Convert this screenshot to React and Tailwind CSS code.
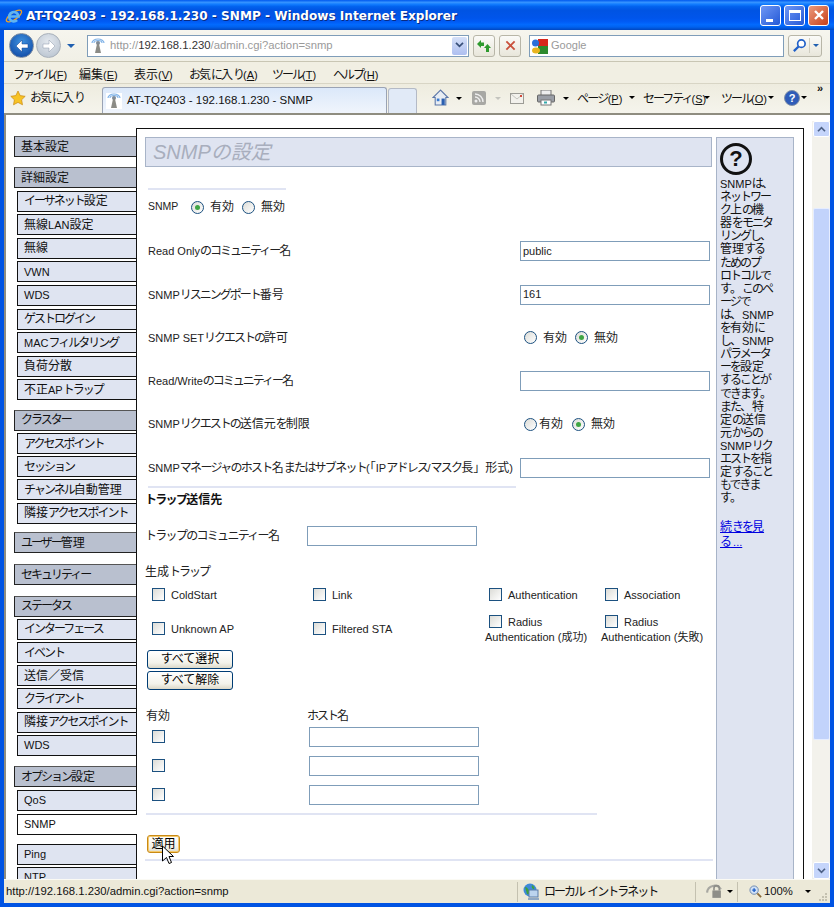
import React from 'react';

const sideGroups = [
  { head: '基本設定', items: [], gap: 'mb-[10px]', pitch: 'mt-[2.6px]' },
  { head: '詳細設定', items: ['イーサネット設定', '無線LAN設定', '無線', 'VWN', 'WDS', 'ゲストログイン', 'MACフィルタリング', '負荷分散', '不正APトラップ'], gap: 'mb-[9.5px]', pitch: 'mt-[2.6px]' },
  { head: 'クラスター', items: ['アクセスポイント', 'セッション', 'チャンネル自動管理', '隣接アクセスポイント'], gap: 'mb-[8.5px]', pitch: 'mt-[2.2px]' },
  { head: 'ユーザー管理', items: [], gap: 'mb-[11px]', pitch: 'mt-[2.2px]' },
  { head: 'セキュリティー', items: [], gap: 'mb-[10.6px]', pitch: 'mt-[2.2px]' },
  { head: 'ステータス', items: ['インターフェース', 'イベント', '送信／受信', 'クライアント', '隣接アクセスポイント', 'WDS'], gap: 'mb-[10.5px]', pitch: 'mt-[2.2px]' },
  { head: 'オプション設定', items: ['QoS', 'SNMP', 'Ping', 'NTP'], gap: '', pitch: 'mt-[2.6px]' },
];

const helpLines = ['SNMPは、', 'ネットワー', 'ク上の機', '器をモニタ', 'リングし、', '管理する', 'ためのプ', 'ロトコルで', 'す。このペ', 'ージで', 'は、SNMP', 'を有効に', 'し、SNMP', 'パラメータ', 'ーを設定', 'することが', 'できます。', 'また、特', '定の送信', '元からの', 'SNMPリク', 'エストを指', '定すること', 'もできま', 'す。'];

// the screenshot's japanese font has narrow kana, so kana runs get squeezed
function K({ children, loose }) {
  const parts = children.split(/([\u3040-\u30FF]+|[\u4E00-\u9FFF「」、。／]+)/).filter(Boolean);
  return parts.map((p, i) => {
    if (/^[\u3040-\u30FF]/.test(p)) return <span key={i} className={`text-[12px] ${loose ? 'tracking-[-1.7px]' : 'tracking-[-2px]'}`}>{p}</span>;
    if (/^[\u4E00-\u9FFF「」、。／]/.test(p)) return <span key={i} className="text-[12px]">{p}</span>;
    return p;
  });
}

function Antenna({ className }) {
  return (
    <svg viewBox="0 0 16 16" className={className}>
      <path d="M2 5a6 4 0 0 1 12 0M4 5a4 2.5 0 0 1 8 0" fill="none" stroke="#7fb2e8" strokeWidth="1.2" />
      <circle cx="8" cy="5" r="2" fill="#7f8a96" />
      <path d="M7 6h2l2 9H5z" fill="#8b8b86" />
    </svg>
  );
}

function IeLogo() {
  return (
    <svg viewBox="0 0 18 18" className="w-[18px] h-[18px]">
      <ellipse cx="9" cy="9" rx="9" ry="3.5" fill="none" stroke="#f2a321" strokeWidth="1.3" transform="rotate(-35 9 9)" />
      <path d="M4.500 9.500h9a4.700 4.700 0 1 0-1.400 3.600" fill="none" stroke="#5fb4f2" strokeWidth="2.600" />
    </svg>
  );
}

function Arrow({ dir }) {
  return (
    <svg viewBox="0 0 16 16" className="w-[16px] h-[16px]">
      <path d={dir === 'left' ? 'M8 2L2 8l6 6v-4h6V6H8z' : 'M8 2l6 6-6 6v-4H2V6h6z'} fill="#fff" stroke={dir === 'left' ? '#0d3d8c' : '#8b97a8'} strokeWidth=".5" />
    </svg>
  );
}

function Caret({ color = 'border-t-black', className = '' }) {
  return <span className={`inline-block w-0 h-0 border-x-[3px] border-x-transparent border-t-[3px] ${color} ${className}`} />;
}

function MenuItem({ label, k, className }) {
  return <span className={`absolute top-[4px] text-[11px] ${className}`}><K>{label}</K>(<u>{k}</u>)</span>;
}

function SideHead({ label }) {
  return (
    <div className="h-[21px] ml-[8px] pl-[6px] flex items-center bg-[#b9c0cf] border-t border-l border-b border-[#222] border-t-[#555] text-[11px] text-[#111]"><span><K>{label}</K></span></div>
  );
}

function SideItem({ label, active, pitch }) {
  return (
    <div className={`h-[21px] ml-[11px] pl-[6px] flex items-center border-t border-l border-b border-[#111] text-[11px] text-[#111] whitespace-nowrap ${pitch} ${active ? 'bg-white -mr-px relative z-10 mb-[9px]' : 'bg-[#dfe4f1]'}`}><span><K>{label}</K></span></div>
  );
}

function Radio({ checked }) {
  return (
    <span className="w-[13px] h-[13px] shrink-0 rounded-full border border-[#1c5180] bg-[linear-gradient(135deg,#dcdcd7,#ffffff)] flex items-center justify-center">
      {checked && <span className="w-[5px] h-[5px] rounded-full bg-[#3fa544]" />}
    </span>
  );
}

function Check() {
  return <span className="w-[13px] h-[13px] shrink-0 border border-[#1c5180] bg-[linear-gradient(135deg,#dcdcd7,#ffffff)] block" />;
}

function TextBox({ value, className = 'w-[190px]' }) {
  return <div className={`h-[20px] bg-white border border-[#7f9db9] pl-[2px] flex items-center text-[11px] text-[#222] ${className}`}>{value}</div>;
}

function XpButton({ children, className }) {
  return <div className={`rounded-[3px] border border-[#003c74] bg-[linear-gradient(180deg,#ffffff,#f3f2ea_70%,#dcd8c8)] flex items-center justify-center text-[12px] text-black ${className}`}>{children}</div>;
}

function FormRow({ label, loose, children }) {
  return (
    <div className="h-[20px] flex items-center justify-between">
      <span className="text-[11px] text-[#222] whitespace-nowrap"><K loose={loose}>{label}</K></span>
      {children}
    </div>
  );
}

function TrapCheck({ label }) {
  return (
    <div className="flex items-center gap-[6px] pl-[7px] text-[11px] text-[#222] whitespace-nowrap">
      <Check />
      <span>{label}</span>
    </div>
  );
}

function RadiusCheck({ suffix }) {
  return (
    <div className="self-start mt-[2px] text-[11px] text-[#222] whitespace-nowrap">
      <div className="flex items-center gap-[6px] pl-[7px] h-[14px]">
        <Check />
        <span>Radius</span>
      </div>
      <div className="pl-[3px]">Authentication ({suffix})</div>
    </div>
  );
}

function Hr({ className }) {
  return <div className={`h-[2px] bg-[#e0e4f3] ${className}`} />;
}

export default function App() {
  return (
    <div className="w-[834px] h-[907px] overflow-hidden flex flex-col bg-[#0053e3] font-['Liberation_Sans','Noto_Sans_CJK_JP',sans-serif]">
      {/* title bar */}
      <div className="h-[30px] shrink-0 flex items-center pl-[5px] pr-[5px] pt-[2px] gap-[3px] bg-[linear-gradient(180deg,#0058ee_0%,#3593ff_8%,#127dff_14%,#0262ee_22%,#0054e3_34%,#0055eb_60%,#005bf5_72%,#026afe_82%,#0062ef_90%,#0046c0_100%)]">
        <IeLogo />
        <span className="text-white font-bold text-[13px] flex-1 font-['DejaVu_Sans',sans-serif] [text-shadow:1px_1px_0_#0a2a80] scale-x-[0.93] origin-left whitespace-nowrap">AT-TQ2403 - 192.168.1.230 - SNMP - Windows Internet Explorer</span>
        <div className="flex gap-[3px] items-center -mt-[2px]">
          <div className="w-[21px] h-[21px] rounded-[3px] border border-white bg-[linear-gradient(135deg,#6f97f5,#2459d6)] flex items-end pb-[3px] pl-[5px]"><span className="w-[7px] h-[3px] bg-white block" /></div>
          <div className="w-[21px] h-[21px] rounded-[3px] border border-white bg-[linear-gradient(135deg,#6f97f5,#2459d6)] flex items-center justify-center"><span className="w-[12px] h-[11px] border border-white border-t-[3px] block" /></div>
          <div className="w-[21px] h-[21px] rounded-[3px] border border-white bg-[linear-gradient(135deg,#eb9a7c,#c9401a)] flex items-center justify-center">
            <svg viewBox="0 0 12 12" className="w-[12px] h-[12px]"><path d="M2 2l8 8M10 2l-8 8" stroke="#fff" strokeWidth="2.400" /></svg>
          </div>
        </div>
      </div>

      <div className="flex-1 min-h-0 mx-[4px] mb-[4px] flex flex-col bg-[#ece9d8]">
        {/* address row */}
        <div className="h-[32px] shrink-0 flex items-center relative bg-[linear-gradient(180deg,#f6f5ee,#f1f0e6)] border-b border-[#c9c6b4]">
          <div className="ml-[5px] w-[25px] h-[25px] rounded-full border border-[#7a8aa0] bg-[radial-gradient(circle_at_50%_35%,#3e92e0,#0a3f9c)] flex items-center justify-center"><Arrow dir="left" /></div>
          <div className="ml-[2px] w-[25px] h-[25px] rounded-full border border-[#a8b0ba] bg-[radial-gradient(circle_at_50%_35%,#e4e9ef,#b4bfcc)] flex items-center justify-center"><Arrow dir="right" /></div>
          <Caret color="border-t-[#1f5fb0]" className="ml-[6px] !border-x-[4px] !border-t-[4px]" />
          <div className="ml-[12px] w-[382px] h-[22px] bg-white border border-[#7f9db9] flex items-center pl-[2px] text-[11.3px] text-[#9a9a9a]">
            <Antenna className="w-[16px] h-[16px]" />
            <span className="ml-[4px]">http://<span className="text-[#333]">192.168.1.230</span>/admin.cgi?action=snmp</span>
            <div className="ml-auto w-[15px] h-[18px] mr-[1px] rounded-[2px] bg-[linear-gradient(180deg,#d5e0f8,#aebff0)] flex items-center justify-center">
              <svg viewBox="0 0 10 8" className="w-[9px] h-[7px]"><path d="M1 1l4 4 4-4" fill="none" stroke="#39507a" strokeWidth="2" /></svg>
            </div>
          </div>
          <div className="ml-[4px] w-[22px] h-[22px] rounded-[3px] border border-[#b8b6a8] bg-[linear-gradient(180deg,#fbfbf8,#e8e6da)] flex items-center justify-center">
            <svg viewBox="0 0 16 16" className="w-[16px] h-[16px]"><path d="M1 6l4-4v2.500h3V8H5v2zM15 10l-3.500-4L8 10h2v4h3v-4z" fill="#2e9a2e" /></svg>
          </div>
          <div className="ml-[4px] w-[22px] h-[22px] rounded-[3px] border border-[#b8b6a8] bg-[linear-gradient(180deg,#fbfbf8,#e8e6da)] flex items-center justify-center">
            <svg viewBox="0 0 12 12" className="w-[11px] h-[11px]"><path d="M1.500 1.500l9 9M10.500 1.500l-9 9" stroke="#c9503c" strokeWidth="2" /></svg>
          </div>
          <div className="ml-[8px] w-[255px] h-[22px] bg-white border border-[#7f9db9] flex items-center pl-[2px] text-[11px] text-[#9a9a9a]">
            <svg viewBox="0 0 16 16" className="w-[16px] h-[16px]">
              <rect x="6" y="1" width="10" height="7" fill="#d8261c" />
              <rect x="6" y="8" width="10" height="8" fill="#2d8a2d" />
              <circle cx="3.500" cy="5" r="3.500" fill="#2a6fd8" />
              <ellipse cx="4" cy="12.500" rx="4" ry="3" fill="#e8b41f" />
            </svg>
            <span className="ml-[3px]">Google</span>
          </div>
          <div className="ml-[4px] w-[34px] h-[22px] rounded-[3px] border border-[#b8b6a8] bg-[linear-gradient(180deg,#fbfbf8,#e8e6da)] flex items-center">
            <div className="w-[21px] flex justify-center border-r border-[#cfcdc0]">
              <svg viewBox="0 0 16 16" className="w-[15px] h-[15px]"><circle cx="10" cy="6" r="4" fill="#fff" stroke="#1f5fc8" strokeWidth="1.800" /><path d="M7 9l-5 5" stroke="#1f5fc8" strokeWidth="2.400" /></svg>
            </div>
            <Caret color="border-t-[#1f5fb0]" className="ml-[3px]" />
          </div>
        </div>

        {/* menu row */}
        <div className="h-[22px] shrink-0 relative bg-[#f1efe3] border-b border-[#d8d5c5] text-[#111] whitespace-nowrap">
          <MenuItem label="ファイル" k="F" className="left-[9px]" />
          <MenuItem label="編集" k="E" className="left-[75px]" />
          <MenuItem label="表示" k="V" className="left-[130px]" />
          <MenuItem label="お気に入り" k="A" className="left-[185px]" />
          <MenuItem label="ツール" k="T" className="left-[268px]" />
          <MenuItem label="ヘルプ" k="H" className="left-[329px]" />
        </div>

        {/* tab row */}
        <div className="h-[31px] shrink-0 flex items-end bg-[linear-gradient(180deg,#eeecdf,#f5f4ec)] border-b-2 border-[#8f8d80] text-[11.5px] text-[#111] whitespace-nowrap">
          <div className="w-[98px] h-[30px] flex items-center pl-[6px] gap-[4px]">
            <svg viewBox="0 0 16 16" className="w-[16px] h-[16px]"><path d="M8 1l2.200 4.600 5 .7-3.600 3.500.9 5L8 12.400 3.500 14.800l.9-5L.8 6.300l5-.7z" fill="#f7c325" stroke="#c98a15" strokeWidth=".7" /></svg>
            <span><K>お気に入り</K></span>
          </div>
          <div className="w-[285px] h-[26px] rounded-t-[3px] border border-b-0 border-[#9aa3b4] bg-[linear-gradient(180deg,#dbe8fa,#f0f5fc)] flex items-center pl-[3px] gap-[5px]">
            <Antenna className="w-[16px] h-[16px] bg-white" />
            <span>AT-TQ2403 - 192.168.1.230 - SNMP</span>
          </div>
          <div className="w-[29px] h-[25px] ml-px rounded-t-[3px] border border-b-0 border-[#b4bac6] bg-[#e1eaf7]" />
          <div className="flex-1 h-[30px] relative flex items-center">
            <svg viewBox="0 0 16 16" className="absolute left-[15px] top-[6px] w-[17px] h-[17px]"><path d="M8 1L1 8h2v7h10V8h2z" fill="#e8edf3" stroke="#5b76a8" /><rect x="9" y="9" width="3" height="6" fill="#2a5fb0" /><rect x="4.500" y="9" width="2.500" height="2.500" fill="#3a7ad0" /></svg>
            <Caret className="absolute left-[39px] top-[14px]" />
            <svg viewBox="0 0 14 14" className="absolute left-[55px] top-[8px] w-[14px] h-[14px]"><rect width="14" height="14" rx="2" fill="#a8a8a4" /><circle cx="4" cy="10" r="1.500" fill="#eee" /><path d="M3 6a5 5 0 0 1 5 5M3 3a8 8 0 0 1 8 8" fill="none" stroke="#eee" strokeWidth="1.400" /></svg>
            <Caret color="border-t-[#c4c4be]" className="absolute left-[78px] top-[14px]" />
            <svg viewBox="0 0 14 11" className="absolute left-[93px] top-[10px] w-[14px] h-[11px]"><rect x=".5" y=".5" width="13" height="10" fill="#f2f1ec" stroke="#9c9c96" /><path d="M1 1l6 5 6-5" fill="none" stroke="#c4c4be" /><rect x="10" y="2" width="2" height="2" fill="#d04a3a" /></svg>
            <svg viewBox="0 0 18 16" className="absolute left-[120px] top-[7px] w-[18px] h-[16px]"><rect x="4" y="0" width="10" height="6" fill="#eee" stroke="#777" /><rect x="0.500" y="5" width="17" height="7" rx="1" fill="#9a9ea6" stroke="#666" /><rect x="4" y="10" width="10" height="5" fill="#fff" stroke="#777" /><rect x="7" y="11.500" width="3" height="2" fill="#3aa" /></svg>
            <Caret className="absolute left-[146px] top-[14px]" />
            <span className="absolute left-[160px] top-[7px] text-[11px]"><K loose>ページ</K>(<u>P</u>)</span>
            <Caret className="absolute left-[212px] top-[13px]" />
            <span className="absolute left-[226px] top-[7px] text-[11px]"><K>セーフティ</K>(<u>S</u>)</span>
            <Caret className="absolute left-[287px] top-[13px]" />
            <span className="absolute left-[304px] top-[7px] text-[11px]"><K>ツール</K>(<u>O</u>)</span>
            <Caret className="absolute left-[351px] top-[13px]" />
            <div className="absolute left-[367px] top-[7px] w-[16px] h-[16px] rounded-full bg-[#2f5cb8] border border-[#8090a8] text-white font-bold text-[11px] flex items-center justify-center">?</div>
            <Caret className="absolute left-[384px] top-[13px]" />
            <span className="absolute left-[400px] top-[-3px] text-[11px] font-bold">»</span>
          </div>
        </div>

        {/* page */}
        <div className="flex-1 min-h-0 flex bg-white border-l-2 border-[#8f8d80] overflow-hidden">
          <div className="w-[806px] shrink-0 pt-[13px] overflow-hidden flex items-start">
            <div className="w-[130px] shrink-0 pt-[8px]">
              {sideGroups.map((g) => (
                <div key={g.head} className={g.gap}>
                  <SideHead label={g.head} />
                  {g.items.map((it) => (
                    <SideItem key={it} label={it} pitch={g.pitch} active={it === 'SNMP'} />
                  ))}
                </div>
              ))}
            </div>
            <div className="w-[668px] h-[900px] shrink-0 border-t border-x border-[#111] flex">
              {/* form */}
              <div className="w-[579px] shrink-0 pt-[8px] pl-[8px]">
                <div className="w-[567px] h-[30px] bg-[#dfe4f1] border border-[#a8b4c8] pl-[7px] flex items-center italic text-[20px] text-[#a8aebd]">SNMPの設定</div>
                <Hr className="w-[138px] mt-[21px] ml-[3px]" />
                <div className="w-[562px] ml-[3px] mt-[7px] flex flex-col gap-[23.3px]">
                  <div className="h-[20px] mb-[1px] flex items-center text-[10.5px] text-[#222]">
                    <span className="w-[43px]">SNMP</span>
                    <Radio checked />
                    <span className="ml-[6px] w-[32px]"><K>有効</K></span>
                    <Radio />
                    <span className="ml-[6px]"><K>無効</K></span>
                  </div>
                  <FormRow label="Read Onlyのコミュニティー名"><TextBox value="public" /></FormRow>
                  <FormRow label="SNMPリスニングポート番号"><TextBox value="161" /></FormRow>
                  <FormRow label="SNMP SETリクエストの許可">
                    <div className="w-[190px] pl-[4px] flex items-center text-[12px] text-[#222]">
                      <Radio />
                      <span className="ml-[6px] w-[32px]">有効</span>
                      <Radio checked />
                      <span className="ml-[6px]">無効</span>
                    </div>
                  </FormRow>
                  <FormRow label="Read/Writeのコミュニティー名"><TextBox /></FormRow>
                  <FormRow label="SNMPリクエストの送信元を制限">
                    <div className="w-[190px] pl-[4px] flex items-center text-[12px] text-[#222]">
                      <Radio />
                      <span className="ml-[2px] w-[33px]">有効</span>
                      <Radio checked />
                      <span className="ml-[6px]">無効</span>
                    </div>
                  </FormRow>
                  <FormRow loose label="SNMPマネージャのホスト名またはサブネット(「IPアドレス/マスク長」形式)"><TextBox /></FormRow>
                </div>
                <Hr className="w-[368px] mt-[8px] ml-[3px]" />
                <div className="h-[16px] mt-[4px] flex items-center text-[12px] font-bold text-[#111]"><span><K loose>トラップ送信先</K></span></div>
                <div className="h-[20px] mt-[18px] flex items-center">
                  <span className="w-[162px] text-[12px] text-[#222]"><K loose>トラップのコミュニティー名</K></span>
                  <TextBox className="w-[170px]" />
                </div>
                <div className="h-[16px] mt-[18px] flex items-center text-[12px] text-[#222]"><span><K>生成トラップ</K></span></div>
                <div className="mt-[5px] grid grid-cols-[161px_176px_116px_1fr] grid-rows-[20px_32px] gap-y-[8px] items-center">
                  <TrapCheck label="ColdStart" />
                  <TrapCheck label="Link" />
                  <TrapCheck label="Authentication" />
                  <TrapCheck label="Association" />
                  <TrapCheck label="Unknown AP" />
                  <TrapCheck label="Filtered STA" />
                  <RadiusCheck suffix="成功" />
                  <RadiusCheck suffix="失敗" />
                </div>
                <XpButton className="w-[86px] h-[19px] ml-[2px] mt-[5px]">すべて選択</XpButton>
                <XpButton className="w-[86px] h-[19px] ml-[2px] mt-[2px]">すべて解除</XpButton>
                <div className="h-[16px] mt-[18px] flex items-center text-[12px] text-[#222]">
                  <span className="w-[162px] pl-px">有効</span>
                  <span><K>ホスト名</K></span>
                </div>
                <div className="mt-[3px] flex flex-col gap-[9px]">
                  {[0, 1, 2].map((n) => (
                    <div key={n} className="h-[20px] flex items-center">
                      <span className="w-[164px] pl-[7px]"><Check /></span>
                      <TextBox className="w-[170px]" />
                    </div>
                  ))}
                </div>
                <Hr className="w-[451px] mt-[8px] ml-px" />
                <div className="relative w-[33px] h-[18px] mt-[20px] ml-[2px]">
                  <XpButton className="w-[33px] h-[18px] !border-[#c98a15] shadow-[inset_0_0_0_1px_#f5c96a]">適用</XpButton>
                  <svg viewBox="0 0 13 21" className="absolute left-[14px] top-[10px] w-[14px] h-[21px] z-10"><path d="M1 1v15l4-3.500 2.500 6 2.500-1-2.500-6H12z" fill="#fff" stroke="#000" strokeWidth="1" /></svg>
                </div>
                <Hr className="w-[568px] mt-[6px]" />
              </div>
              {/* help */}
              <div className="w-[78px] shrink-0 mt-[8px] bg-[#dfe4f1] border-x border-t border-[#a8b4c8] pl-[3px] text-[11px] leading-[13.1px] text-[#111] whitespace-nowrap">
                <div className="w-[32px] h-[32px] mt-[5px] mb-[3px] rounded-full border-[3px] border-[#111] flex items-center justify-center font-bold text-[22px] leading-none">?</div>
                {helpLines.map((line, i) => (
                  <div key={i}><K>{line}</K></div>
                ))}
                <div className="mt-[15px] leading-[15px] text-[#0000e0] underline"><K>続きを見</K></div>
                <div className="leading-[15px] text-[#0000e0] underline"><K>る</K> ...</div>
              </div>
            </div>
          </div>
          {/* scrollbar */}
          <div className="w-[18px] shrink-0 mt-[6px] bg-[#f3f2ec] flex flex-col items-center">
            <div className="w-[17px] h-[16px] rounded-[2px] bg-[#c5d5fb] border border-white flex items-center justify-center">
              <svg viewBox="0 0 10 8" className="w-[9px] h-[7px]"><path d="M1 6l4-4 4 4" fill="none" stroke="#4d6185" strokeWidth="2" /></svg>
            </div>
            <div className="w-[17px] h-[532px] mt-[71px] rounded-[2px] bg-[#c2d3fb] border border-[#e6edff]" />
            <div className="w-[17px] h-[17px] mt-auto rounded-[2px] bg-[#c5d5fb] border border-white flex items-center justify-center">
              <svg viewBox="0 0 10 8" className="w-[9px] h-[7px]"><path d="M1 2l4 4 4-4" fill="none" stroke="#4d6185" strokeWidth="2" /></svg>
            </div>
          </div>
        </div>

        {/* status bar */}
        <div className="h-[24px] shrink-0 flex items-center bg-[#ece9d8] border-t border-[#fbfaf4] text-[11.3px] text-[#111] whitespace-nowrap">
          <span className="w-[513px] pl-[2px]">http://192.168.1.230/admin.cgi?action=snmp</span>
          <div className="w-[178px] h-[20px] flex items-center border-l border-[#c4c1b0] pl-[4px] gap-[4px]">
            <svg viewBox="0 0 18 18" className="w-[18px] h-[18px]"><circle cx="8" cy="7" r="6.500" fill="#3f8ad8" /><path d="M3 4c3 0 3 3 5 4s-1 4-3 3zM10 2c2 1 3 3 2 4s-3-2-2-4z" fill="#3da23d" /><rect x="7" y="7" width="9" height="7" fill="#bcd4ee" stroke="#5a7ca8" /><rect x="6" y="15" width="11" height="2" fill="#8fa8c4" /></svg>
            <span><K>ローカル</K> <K>イントラネット</K></span>
          </div>
          <div className="w-[42px] h-[20px] flex items-center border-l border-[#c4c1b0] pl-[10px]">
            <svg viewBox="0 0 16 16" className="w-[17px] h-[17px]"><path d="M1 9a7 7 0 0 1 13-3" fill="none" stroke="#a8a8a2" strokeWidth="2" /><rect x="6" y="7" width="8" height="7" fill="#8e8e88" /><path d="M7.500 7V5a2.500 2.500 0 0 1 5 0v2" fill="none" stroke="#8e8e88" strokeWidth="1.500" /></svg>
            <Caret className="ml-[4px]" />
          </div>
          <div className="flex-1 h-[20px] flex items-center border-l border-[#c4c1b0] pl-[11px] relative">
            <svg viewBox="0 0 14 14" className="w-[13px] h-[13px]"><circle cx="5.500" cy="5.500" r="4.500" fill="#cfe0f6" stroke="#6a86ad" /><path d="M3.500 5.500h4M5.500 3.500v4" stroke="#1f5fc8" strokeWidth="1.500" /><path d="M9 9l4 4" stroke="#8a6a3a" strokeWidth="2" /></svg>
            <span className="ml-[2px]">100%</span>
            <Caret className="absolute left-[67px] top-[8px]" />
            <svg viewBox="0 0 10 10" className="absolute right-[2px] bottom-0 w-[10px] h-[10px]"><path d="M7 1h2v2H7zM4 4h2v2H4zM7 4h2v2H7zM1 7h2v2H1zM4 7h2v2H4zM7 7h2v2H7z" fill="#c4c1b0" /></svg>
          </div>
        </div>
      </div>
    </div>
  );
}
